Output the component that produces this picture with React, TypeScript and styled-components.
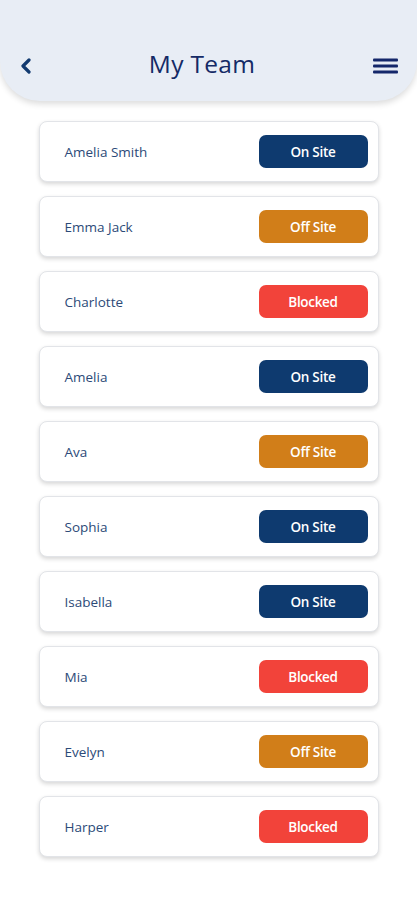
import React from "react";
import styled, { createGlobalStyle } from "styled-components";

const Global = createGlobalStyle`
  html, body { margin: 0; padding: 0; background: #ffffff; }
  body { font-family: "Open Sans", "Noto Sans", sans-serif; }
`;

const Page = styled.div`
  width: 417px;
  min-height: 900px;
  background: #ffffff;
  display: flex;
  flex-direction: column;
  align-items: center;
`;

const Header = styled.header`
  width: 100%;
  box-sizing: border-box;
  height: 101px;
  background: #e8edf5;
  border-radius: 0 0 40px 40px;
  box-shadow: 0 3px 6px rgba(0, 0, 0, 0.14);
  display: flex;
  align-items: flex-end;
  justify-content: space-between;
  padding: 0 19px 25px 20px;
`;

const IconButton = styled.button<{ $align?: string }>`
  border: none;
  background: transparent;
  padding: 0;
  width: 26px;
  height: 20px;
  display: flex;
  align-items: center;
  justify-content: ${(p) => p.$align || "center"};
  color: #123a70;
`;

const Title = styled.h1`
  margin: 0 14px 0 0;
  font-size: 24.5px;
  font-weight: 500;
  color: #142a66;
  letter-spacing: 0.3px;
  line-height: 28px;
  transform: translateY(2px);
`;

const List = styled.div`
  margin-top: 20px;
  display: flex;
  flex-direction: column;
  gap: 14px;
  width: 340px;
`;

const Card = styled.div`
  height: 61px;
  box-sizing: border-box;
  border: 1px solid #e2e4e8;
  border-radius: 8px;
  background: #ffffff;
  box-shadow: 0 2px 4px rgba(0, 0, 0, 0.16);
  display: flex;
  align-items: center;
  justify-content: space-between;
  padding: 0 10px 0 25px;
`;

const Name = styled.span`
  font-size: 13.5px;
  color: #2c4a78;
`;

const statusColors: Record<string, string> = {
  "On Site": "#0e3a6f",
  "Off Site": "#d17e19",
  Blocked: "#f2433a",
};

const Badge = styled.span<{ $bg: string }>`
  width: 109px;
  height: 33px;
  border-radius: 7px;
  background: ${(p) => p.$bg};
  color: #ffffff;
  font-size: 13.5px;
  font-weight: 600;
  display: flex;
  align-items: center;
  justify-content: center;
  letter-spacing: -0.3px;
`;

const team: [string, string][] = [
  ["Amelia Smith", "On Site"],
  ["Emma Jack", "Off Site"],
  ["Charlotte", "Blocked"],
  ["Amelia", "On Site"],
  ["Ava", "Off Site"],
  ["Sophia", "On Site"],
  ["Isabella", "On Site"],
  ["Mia", "Blocked"],
  ["Evelyn", "Off Site"],
  ["Harper", "Blocked"],
];

export default function App() {
  return (
    <Page>
      <Global />
      <Header>
        <IconButton $align="flex-start" aria-label="Back">
          <svg width="12" height="16" viewBox="0 0 12 16">
            <path d="M9 2 L3 8 L9 14" fill="none" stroke="#123a70" strokeWidth="3.2" strokeLinecap="round" strokeLinejoin="round" />
          </svg>
        </IconButton>
        <Title>My Team</Title>
        <IconButton $align="flex-end" aria-label="Menu">
          <svg width="25" height="18" viewBox="0 0 25 18">
            <rect x="0" y="1.5" width="25" height="3" rx="1" fill="#14276a" />
            <rect x="0" y="7.5" width="25" height="3" rx="1" fill="#14276a" />
            <rect x="0" y="13.5" width="25" height="3" rx="1" fill="#14276a" />
          </svg>
        </IconButton>
      </Header>
      <List>
        {team.map(([name, status], i) => (
          <Card key={i}>
            <Name>{name}</Name>
            <Badge $bg={statusColors[status]}>{status}</Badge>
          </Card>
        ))}
      </List>
    </Page>
  );
}
